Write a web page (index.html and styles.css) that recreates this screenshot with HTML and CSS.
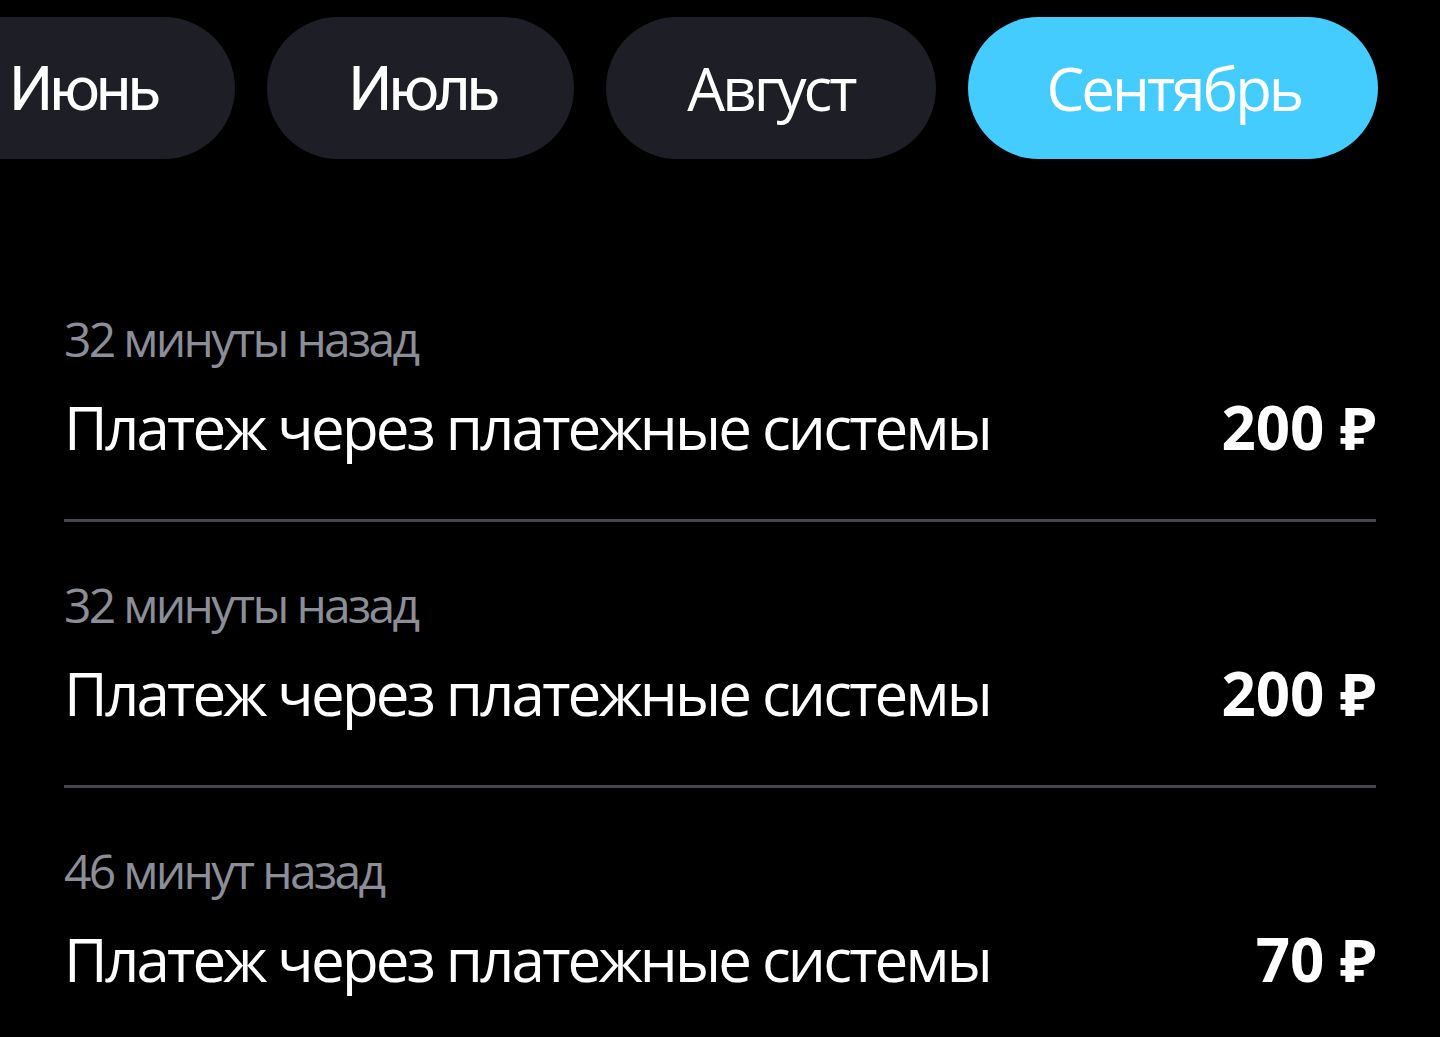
FILE: index.html
```html
<!DOCTYPE html>
<html lang="ru">
<head>
    <meta charset="UTF-8">
    <meta name="viewport" content="width=device-width, initial-scale=1.0">
    <title>Платежи</title>
    <link rel="stylesheet" href="styles.css">
</head>
<body>
    <div class="page">
        <div class="tabs">
            <div class="tab tab-narrow">Июнь</div>
            <div class="tab tab-narrow">Июль</div>
            <div class="tab">Август</div>
            <div class="tab active">Сентябрь</div>
        </div>

        <div class="list">
            <div class="item">
                <div class="time">32 минуты назад</div>
                <div class="row">
                    <span class="title">Платеж через платежные системы</span>
                    <span class="amount">200 ₽</span>
                </div>
            </div>
            <div class="item">
                <div class="time">32 минуты назад</div>
                <div class="row">
                    <span class="title">Платеж через платежные системы</span>
                    <span class="amount">200 ₽</span>
                </div>
            </div>
            <div class="item">
                <div class="time">46 минут назад</div>
                <div class="row">
                    <span class="title">Платеж через платежные системы</span>
                    <span class="amount">70 ₽</span>
                </div>
            </div>
        </div>
    </div>
</body>
</html>
```

FILE: styles.css
```css
* {
    margin: 0;
    padding: 0;
    box-sizing: border-box;
}

body {
    font-family: 'Open Sans', 'Noto Sans', sans-serif;
    background: #000;
    color: #fff;
    overflow: hidden;
}

.page {
    padding: 17px 64px 0;
}

/* полоса месяцев прокручена влево */
.tabs {
    display: flex;
    gap: 32px;
    margin-left: -136px;
}

.tab {
    flex-shrink: 0;
    height: 142px;
    padding: 0 81px;
    border-radius: 71px;
    background: #1e1f26;
    font-size: 60px;
    letter-spacing: -3px;
    display: flex;
    align-items: center;
    white-space: nowrap;
}

.tab-narrow {
    font-family: Roboto, 'Open Sans', sans-serif;
    font-size: 62px;
    letter-spacing: -4px;
    padding: 0 78px 0 81px;
}

.tab.active {
    background: #44ccff;
    padding: 0 77px 0 79px;
}

.list {
    margin-top: 150px;
}

.item {
    padding: 0 0 56px;
    border-bottom: 3px solid #46474e;
}

.item + .item {
    padding-top: 53px;
}

.item:last-child {
    border-bottom: none;
}

.time {
    font-size: 48px;
    line-height: 60px;
    letter-spacing: -2.7px;
    color: #8b8e97;
    margin-bottom: 22px;
}

.row {
    display: flex;
    justify-content: space-between;
    align-items: baseline;
    font-size: 60px;
    line-height: 72px;
}

.title {
    letter-spacing: -2.8px;
}

.amount {
    font-weight: 700;
}
```
